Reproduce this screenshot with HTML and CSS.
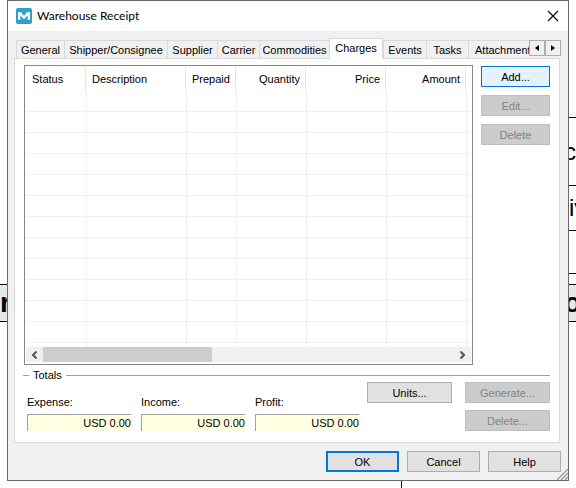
FILE: index.html
```html
<!DOCTYPE html>
<html lang="en">
<head>
<meta charset="utf-8">
<title>Warehouse Receipt</title>
<link rel="stylesheet" href="styles.css">
</head>
<body>
<div class="desktop">
  <div class="gutter gutter-left"><div class="band">r</div></div>
  <main class="window">
    <header class="titlebar">
      <svg class="logo" width="16" height="16" viewBox="0 0 16 16" aria-hidden="true"><rect width="16" height="16" rx="2" fill="#2f9fd0"/><path d="M2 12V4h2.600L8 7.800 11.400 4H14v8h-2.300V7.400L8 11.200 4.300 7.400V12z" fill="#fff"/></svg>
      <h1>Warehouse Receipt</h1>
      <button class="close" aria-label="Close"><svg width="12" height="12" viewBox="0 0 12 12"><path d="M1 1l10 10M11 1L1 11" stroke="#000" stroke-width="1.1"/></svg></button>
    </header>
    <div class="client">
      <div class="tabbar">
        <div class="tabs" role="tablist">
          <button class="tab" role="tab">General</button>
          <button class="tab" role="tab">Shipper/Consignee</button>
          <button class="tab" role="tab">Supplier</button>
          <button class="tab" role="tab">Carrier</button>
          <button class="tab" role="tab">Commodities</button>
          <button class="tab active" role="tab" aria-selected="true">Charges</button>
          <button class="tab" role="tab">Events</button>
          <button class="tab" role="tab">Tasks</button>
          <button class="tab last" role="tab">Attachment</button>
        </div>
        <div class="spinner">
          <button aria-label="Previous tab"><svg width="4" height="6" viewBox="0 0 4 6"><path d="M4 0v6L0 3z"/></svg></button>
          <button aria-label="Next tab"><svg width="4" height="6" viewBox="0 0 4 6"><path d="M0 0v6l4-3z"/></svg></button>
        </div>
      </div>
      <section class="panel">
        <div class="upper">
          <div class="list">
            <div class="rows">
              <table>
                <colgroup><col class="c-status"><col class="c-desc"><col class="c-pre"><col class="c-qty"><col class="c-money"><col class="c-money"><col></colgroup>
                <thead><tr><th>Status</th><th>Description</th><th>Prepaid</th><th class="num">Quantity</th><th class="num">Price</th><th class="num">Amount</th><td></td></tr></thead>
                <tbody>
                  <tr><td></td><td></td><td></td><td></td><td></td><td></td><td></td></tr>
                  <tr><td></td><td></td><td></td><td></td><td></td><td></td><td></td></tr>
                  <tr><td></td><td></td><td></td><td></td><td></td><td></td><td></td></tr>
                  <tr><td></td><td></td><td></td><td></td><td></td><td></td><td></td></tr>
                  <tr><td></td><td></td><td></td><td></td><td></td><td></td><td></td></tr>
                  <tr><td></td><td></td><td></td><td></td><td></td><td></td><td></td></tr>
                  <tr><td></td><td></td><td></td><td></td><td></td><td></td><td></td></tr>
                  <tr><td></td><td></td><td></td><td></td><td></td><td></td><td></td></tr>
                  <tr><td></td><td></td><td></td><td></td><td></td><td></td><td></td></tr>
                  <tr><td></td><td></td><td></td><td></td><td></td><td></td><td></td></tr>
                  <tr><td></td><td></td><td></td><td></td><td></td><td></td><td></td></tr>
                  <tr><td></td><td></td><td></td><td></td><td></td><td></td><td></td></tr>
                  <tr><td></td><td></td><td></td><td></td><td></td><td></td><td></td></tr>
                </tbody>
              </table>
            </div>
            <div class="scrollbar">
              <button aria-label="Scroll left"><svg width="7" height="8" viewBox="0 0 7 8"><path d="M5.500 .5L2 4l3.500 3.500" fill="none" stroke="#505050" stroke-width="2"/></svg></button>
              <div class="track"><div class="thumb"></div></div>
              <button aria-label="Scroll right"><svg width="7" height="8" viewBox="0 0 7 8"><path d="M1.500 .5L5 4 1.500 7.500" fill="none" stroke="#505050" stroke-width="2"/></svg></button>
            </div>
          </div>
          <div class="side">
            <button class="btn hot">Add...</button>
            <button class="btn" disabled>Edit...</button>
            <button class="btn" disabled>Delete</button>
          </div>
        </div>
        <div class="group-title"><h2>Totals</h2></div>
        <div class="totals">
          <div class="fields">
            <div class="field"><label for="expense">Expense:</label><input id="expense" value="USD 0.00" readonly></div>
            <div class="field"><label for="income">Income:</label><input id="income" value="USD 0.00" readonly></div>
            <div class="field"><label for="profit">Profit:</label><input id="profit" value="USD 0.00" readonly></div>
          </div>
          <div class="actions">
            <button class="btn">Units...</button>
            <div class="stack">
              <button class="btn" disabled>Generate...</button>
              <button class="btn" disabled>Delete...</button>
            </div>
          </div>
        </div>
      </section>
      <footer class="footer">
        <button class="btn default">OK</button>
        <button class="btn">Cancel</button>
        <button class="btn">Help</button>
      </footer>
    </div>
    <svg class="grip" width="11" height="11" viewBox="0 0 11 11" aria-hidden="true"><path d="M0 11L11 0M4 11l7-7M8 11l3-3" stroke="#8c8c8c" stroke-width="1.200"/></svg>
  </main>
  <div class="gutter gutter-right">
    <div class="cell first"></div>
    <div class="cell tall">c</div>
    <div class="cell mid">iv</div>
    <div class="cell low"></div>
    <div class="cell gap"></div>
    <div class="band">o</div>
  </div>
  <div class="below"></div>
</div>
</body>
</html>
```

FILE: styles.css
```css
* { box-sizing: border-box; }

body {
  margin: 0;
  background: #fff;
  color: #000;
  font: 11px/14px "Liberation Sans", Arial, sans-serif;
}

button, input { font: inherit; color: inherit; }
button { padding: 0; border: 0; background: none; }
h1, h2 { margin: 0; font-weight: normal; }
h2 { font-size: 11px; }
svg { display: block; }

.desktop {
  display: grid;
  grid-template-columns: 7px minmax(0, 1fr) 7px;
  grid-template-rows: auto 7px;
}

/* Document visible behind the dialog */
.gutter { overflow: hidden; }
.gutter-left { padding-top: 284px; }
.band, .cell { display: flex; align-items: center; }
.band {
  height: 38px;
  border: solid #000;
  border-width: 1px 0;
  background: #e8e8e8;
  font: bold 28px/36px "Liberation Sans", Arial, sans-serif;
}
.gutter-right .band { justify-content: center; }
.cell {
  border-bottom: 1px solid #000;
  font: 24px/28px "Liberation Sans", Arial, sans-serif;
}
.first { height: 118px; }
.tall { height: 68px; justify-content: flex-end; }
.mid { height: 45px; }
.low { height: 43px; }
.gap { height: 10px; border: 0; }
.below {
  grid-column: 1 / -1;
  width: 402px;
  border-right: 1px solid #000;
}

.window {
  position: relative;
  border: 1px solid #6b6b6b;
  background: #f0f0f0;
}
.titlebar {
  display: flex;
  align-items: center;
  height: 30px;
  padding: 0 9px 0 8px;
  gap: 5px;
  background: #fff;
}
.titlebar h1 { flex: 1; font: 12px/16px Lato, "Open Sans", sans-serif; }
.client { padding: 7px 7px 8px 6px; }

/* Tabs */
.tabbar { display: flex; padding-left: 2px; }
.tabs {
  flex: 1;
  min-width: 0;
  display: grid;
  grid-template-columns: 48px 103px 50px 42px 70px 54px 43px 42px minmax(0, 1fr);
  align-items: end;
  height: 20px;
}
.tab {
  height: 18px;
  border: solid #d9d9d9;
  border-width: 1px 0 0 1px;
  overflow: hidden;
  white-space: nowrap;
}
.tab.last { padding-left: 6px; text-align: left; }
.tab.active {
  position: relative;
  height: 21px;
  margin-bottom: -1px;
  padding-bottom: 2px;
  border-right-width: 1px;
  background: #fff;
}
.spinner { display: flex; height: 16px; margin-top: 2px; }
.spinner button {
  display: grid;
  place-items: center;
  width: 16px;
  border: 1px solid #adadad;
  background: #f0f0f0;
}

.panel {
  margin-right: 1px;
  padding: 6px 9px 11px 8px;
  border: 1px solid #d9d9d9;
  background: #fff;
}
.upper { display: flex; gap: 8px; padding-left: 1px; }

/* Charge list */
.list {
  flex: 1;
  min-width: 0;
  padding: 1px;
  border: 1px solid #828790;
}
.rows { height: 280px; overflow: hidden; }
table { width: 100%; table-layout: fixed; border-collapse: separate; border-spacing: 0; }
.c-status { width: 61px; }
.c-desc { width: 100px; }
.c-pre { width: 50px; }
.c-qty { width: 70px; }
.c-money { width: 80px; }
th {
  height: 24px;
  padding: 0 7px 0 5px;
  background: linear-gradient(#e5e5e5, #e5e5e5) right 1px top / 1px 100% no-repeat;
  font-weight: normal;
  text-align: left;
}
th:first-child { padding-left: 6px; }
th.num { text-align: right; }
td { padding: 0; }
tbody td {
  height: 21px;
  border: solid #f0f0f0;
  border-width: 0 1px 1px 0;
}
tbody td:last-child { border-right: 0; }
.scrollbar { display: flex; height: 15px; background: #f0f0f0; margin-bottom: 1px; }
.scrollbar button { display: grid; place-items: center; width: 17px; }
.track { flex: 1; }
.thumb { width: 41%; height: 100%; background: #cdcdcd; }

/* Push buttons */
.btn {
  height: 21px;
  border: 1px solid #adadad;
  background: #e1e1e1;
}
.btn:disabled { border-color: #bfbfbf; background: #ccc; color: #838383; }
.hot { border-color: #0078d7; background: #e5f1fb; }
.default { border: 2px solid #0078d7; }
.side { display: grid; align-content: start; gap: 8px; width: 69px; padding-top: 1px; }

/* Totals */
.group-title { display: flex; align-items: center; gap: 4px; margin-top: 3px; }
.group-title::before, .group-title::after {
  content: "";
  width: 6px;
  height: 1px;
  background: #a0a0a0;
}
.group-title::after { flex: 1; }
.totals { display: flex; justify-content: space-between; padding-left: 4px; }
.fields { display: flex; gap: 10px; padding-top: 13px; }
.field { display: grid; gap: 5px; align-content: start; width: 104px; }
.field input {
  width: 100%;
  height: 17px;
  padding: 0;
  border: solid #a0a0a0;
  border-width: 1px 0 0 1px;
  background: #ffffe1;
  text-align: right;
}
.actions { display: flex; align-items: flex-start; gap: 13px; }
.actions .btn { width: 85px; }
.stack { display: grid; gap: 7px; }

.footer { display: flex; justify-content: flex-end; gap: 8px; padding-top: 8px; }
.footer .btn { width: 73px; }
.grip { position: absolute; right: 0; bottom: 0; }
```
